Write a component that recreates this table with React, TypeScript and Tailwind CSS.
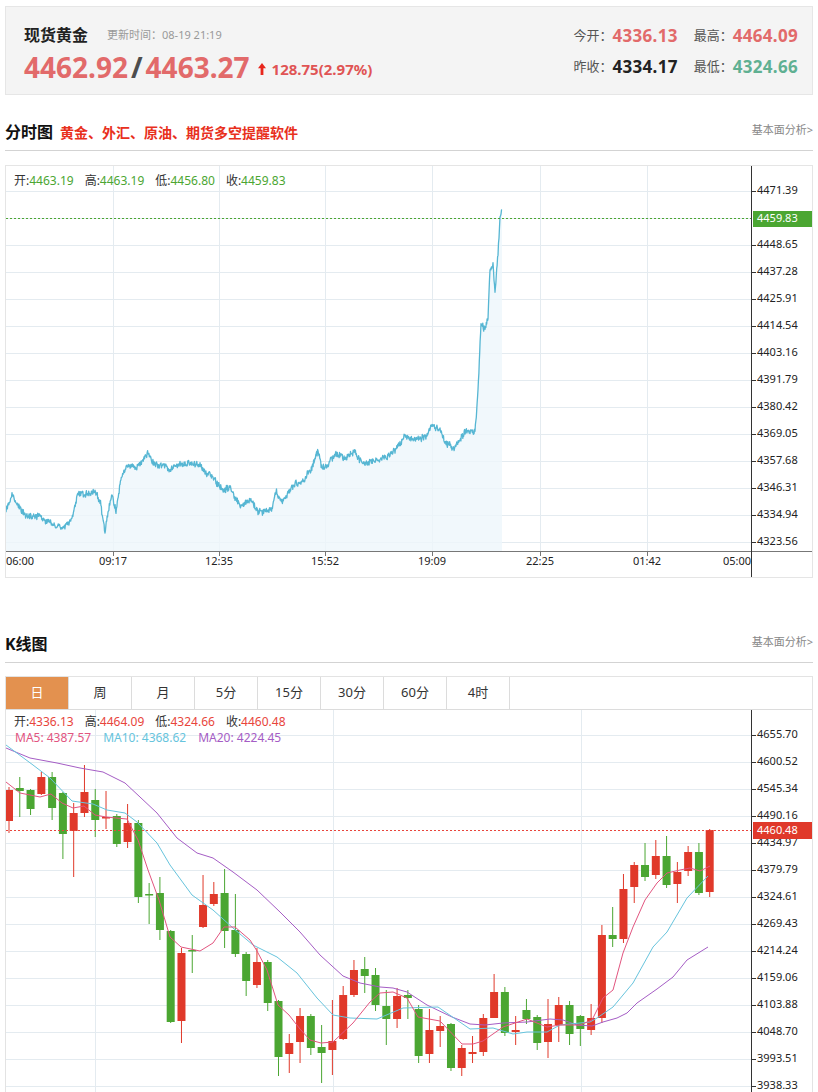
import React from "react";

const RED = "#e0392a";
const GREEN = "#4ba632";

// keypoints of the intraday line, page coordinates
const lineKeys: [number, number][] = [
  [6, 510], [12, 495], [18, 505], [22, 513], [30, 517], [40, 518], [50, 523], [60, 530], [68, 525],
  [72, 515], [78, 492], [90, 492], [95, 490], [100, 500], [105, 533], [108, 510], [112, 495],
  [116, 512], [120, 485], [127, 465], [135, 468], [145, 460], [148, 452], [152, 462], [165, 468],
  [170, 470], [180, 462], [195, 465], [205, 470], [215, 478], [222, 490], [230, 488], [240, 506],
  [250, 500], [258, 513], [265, 510], [272, 508], [276, 490], [282, 500], [290, 493], [296, 483],
  [305, 478], [310, 470], [318, 452], [322, 468], [328, 465], [335, 452], [345, 458], [355, 452],
  [362, 462], [370, 465], [380, 460], [390, 455], [400, 445], [405, 437], [415, 440], [425, 438],
  [432, 425], [440, 430], [447, 443], [455, 447], [460, 440], [466, 430], [475, 433], [478, 390],
  [481, 325], [485, 330], [488, 315], [490, 270], [493, 265], [495, 295], [498, 255], [500, 220],
  [502, 210],
];

const rand = (i: number) => {
  const v = Math.sin(i * 12.9898 + 4.1) * 43758.5453;
  return v - Math.floor(v);
};

function buildLine() {
  const pts: [number, number][] = [];
  let c = 0;
  let walk = 0;
  for (let k = 0; k < lineKeys.length - 1; k++) {
    const [x0, y0] = lineKeys[k];
    const [x1, y1] = lineKeys[k + 1];
    const n = Math.max(1, Math.round((x1 - x0) / 0.45));
    for (let j = 0; j < n; j++) {
      const t = j / n;
      walk = walk * 0.85 + (rand(c++) - 0.5) * 2.2;
      const jitter = (rand(c++ + 9000) - 0.5) * 5.5;
      pts.push([x0 + (x1 - x0) * t, y0 + (y1 - y0) * t + walk + jitter]);
    }
  }
  pts.push(lineKeys[lineKeys.length - 1]);
  return pts;
}

const linePts = buildLine();
const lineD = linePts.map(([x, y], i) => `${i ? "L" : "M"}${x.toFixed(1)} ${y.toFixed(1)}`).join(" ");
const areaD = `${lineD} L502 551 L6 551 Z`;

const minuteLabels = [
  "4471.39", "", "4448.65", "4437.28", "4425.91", "4414.54", "4403.16", "4391.79", "4380.42",
  "4369.05", "4357.68", "4346.31", "4334.94", "4323.56",
];
const minuteTimes = [
  { x: 6, t: "06:00", a: "start" },
  { x: 113, t: "09:17", a: "middle" },
  { x: 219, t: "12:35", a: "middle" },
  { x: 325, t: "15:52", a: "middle" },
  { x: 432, t: "19:09", a: "middle" },
  { x: 540, t: "22:25", a: "middle" },
  { x: 647, t: "01:42", a: "middle" },
  { x: 751, t: "05:00", a: "end" },
];

const kLabels = [
  "4655.70", "4600.52", "4545.34", "4490.16", "4434.97", "4379.79", "4324.61", "4269.43",
  "4214.24", "4159.06", "4103.88", "4048.70", "3993.51", "3938.33", "3883.15",
];

// [bodyTop, bodyBottom, high, low, up]
const candles: number[][] = [
  [790, 821, 787, 833, 1], [788, 791, 777, 817, 0], [790, 809, 789, 815, 0], [777, 794, 772, 795, 1],
  [777, 808, 772, 820, 0], [793, 834, 792, 859, 0], [813, 831, 803, 877, 1], [792, 813, 765, 817, 1],
  [800, 820, 789, 837, 0], [817, 818, 791, 829, 1], [816, 844, 814, 847, 0], [823, 842, 804, 848, 1],
  [823, 897, 820, 903, 0], [894, 895, 883, 924, 0], [893, 930, 877, 940, 0], [931, 1022, 930, 1023, 0],
  [953, 1021, 948, 1043, 1], [950, 951, 935, 973, 0], [905, 927, 875, 928, 1], [894, 904, 882, 906, 1],
  [893, 931, 869, 948, 0], [930, 954, 894, 957, 0], [954, 981, 952, 996, 0], [962, 985, 948, 988, 1],
  [962, 1003, 960, 1011, 0], [1001, 1057, 1000, 1076, 0], [1043, 1054, 1034, 1073, 1], [1016, 1042, 1008, 1063, 1],
  [1016, 1048, 1014, 1055, 0], [1047, 1053, 1025, 1083, 0], [1041, 1050, 1000, 1075, 1], [995, 1039, 986, 1040, 1],
  [970, 995, 960, 997, 1], [969, 976, 957, 993, 0], [975, 1005, 968, 1011, 0], [1006, 1019, 990, 1045, 0],
  [996, 1019, 988, 1028, 1], [995, 998, 990, 1019, 0], [1009, 1056, 1005, 1063, 0], [1030, 1054, 1009, 1063, 1],
  [1026, 1031, 1016, 1047, 1], [1024, 1068, 1023, 1071, 0], [1048, 1068, 1045, 1076, 1], [1052, 1054, 1036, 1063, 1],
  [1018, 1052, 1014, 1056, 1], [992, 1018, 974, 1018, 1], [992, 1033, 987, 1036, 0], [1030, 1032, 1016, 1045, 1],
  [1010, 1019, 999, 1024, 0], [1017, 1043, 1015, 1050, 0], [1024, 1042, 999, 1058, 1], [1005, 1025, 997, 1042, 1],
  [1005, 1034, 1001, 1045, 0], [1016, 1029, 1015, 1046, 0], [1018, 1030, 1004, 1035, 1], [935, 1018, 925, 1023, 1],
  [935, 939, 907, 947, 0], [889, 939, 874, 943, 1], [865, 887, 862, 903, 1], [865, 877, 843, 881, 0],
  [856, 875, 840, 879, 1], [856, 885, 836, 888, 0], [872, 884, 862, 903, 1], [852, 871, 846, 876, 1],
  [852, 893, 843, 895, 0], [830, 892, 829, 897, 1],
];

const ma5 = "6,782 20,793 40,797 51,794 62,803 73,808 84,806 95,815 106,817 116,818 127,819 138,840 148,870 159,900 170,937 181,947 200,951 213,943 224,927 235,927 250,940 257,951 267,970 278,1005 289,1015 300,1029 310,1040 321,1043 333,1042 353,1023 370,1002 380,993 393,992 407,998 418,1017 440,1021 462,1044 473,1044 483,1041 503,1027 527,1019 547,1027 560,1025 580,1025 592,1020 603,998 613,990 623,953 633,927 645,900 657,883 667,873 680,870 690,868 700,871 710,866";
const ma10 = "6,745 33,765 50,778 72,801 93,804 107,810 125,813 137,822 157,843 170,865 192,895 213,910 233,928 253,945 277,957 297,973 317,998 333,1015 350,1018 377,1019 403,1008 438,1007 470,1029 493,1028 513,1034 527,1032 547,1032 560,1025 590,1022 597,1018 613,1007 633,983 653,947 667,932 687,898 708,876";
const ma20 = "6,748 30,758 57,763 80,768 103,772 125,783 140,797 157,813 177,838 197,853 213,858 233,872 257,890 280,912 300,932 320,955 343,976 360,983 380,987 393,988 407,992 427,1005 452,1017 470,1024 485,1025 503,1023 527,1022 550,1019 563,1020 577,1025 592,1026 603,1022 617,1018 627,1013 637,1003 657,989 673,977 687,960 708,947";

function UpArrow() {
  return (
    <svg width="8" height="12" viewBox="0 0 8 12" className="mr-[6px]">
      <path d="M4 0 L8 5.2 H5.4 V12 H2.6 V5.2 H0 Z" fill="#e8261c" />
    </svg>
  );
}

function Header() {
  return (
    <div className="h-[89px] bg-[#f4f4f4] border border-[#e6e6e6] flex justify-between">
      <div className="pl-[18px] pt-[17px]">
        <div className="flex items-center h-[22px]">
          <span className="text-[16px] font-bold text-[#222]">现货黄金</span>
          <span className="ml-[19px] text-[11px] text-[#999]">更新时间：08-19 21:19</span>
        </div>
        <div className="flex items-center h-[32px] mt-[5px]">
          <span className="text-[28px] font-bold text-[#e26a6a] leading-none">4462.92</span>
          <span className="text-[28px] font-bold text-[#4d4d4d] leading-none mx-[3px]">/</span>
          <span className="text-[28px] font-bold text-[#e26a6a] leading-none">4463.27</span>
          <span className="ml-[8px] flex items-center mt-[4px]">
            <UpArrow />
            <span className="text-[15px] font-bold text-[#e05454]">128.75(2.97%)</span>
          </span>
        </div>
      </div>
      <div className="pr-[14px] pt-[17px] grid grid-cols-[auto_auto] gap-x-[16px] gap-y-[7px] h-fit">
        <div className="flex items-center h-[24px]">
          <span className="text-[13px] text-[#555]">今开：</span>
          <span className="text-[17px] font-bold text-[#e26a6a] tracking-[0.3px]">4336.13</span>
        </div>
        <div className="flex items-center h-[24px]">
          <span className="text-[13px] text-[#555]">最高：</span>
          <span className="text-[17px] font-bold text-[#e26a6a] tracking-[0.3px]">4464.09</span>
        </div>
        <div className="flex items-center h-[24px]">
          <span className="text-[13px] text-[#555]">昨收：</span>
          <span className="text-[17px] font-bold text-[#222] tracking-[0.3px]">4334.17</span>
        </div>
        <div className="flex items-center h-[24px]">
          <span className="text-[13px] text-[#555]">最低：</span>
          <span className="text-[17px] font-bold text-[#5fb092] tracking-[0.3px]">4324.66</span>
        </div>
      </div>
    </div>
  );
}

function SectionTitle({ title, promo, className }: { title: string; promo?: string; className?: string }) {
  return (
    <div className={`h-[37px] border-b border-[#d3d3d3] flex items-center justify-between ${className ?? ""}`}>
      <div className="flex items-center">
        <span className="text-[16px] font-bold text-[#111]">{title}</span>
        {promo && <span className="ml-[7px] text-[14px] font-bold text-[#e8301c]">{promo}</span>}
      </div>
      <span className="text-[11px] text-[#888] mt-[-4px]">基本面分析&gt;</span>
    </div>
  );
}

function LegendItem({ label, value, color }: { label: string; value: string; color: string }) {
  return (
    <span className="whitespace-nowrap">
      <span className="text-[#333]">{label}</span>
      <span style={{ color }}>{value}</span>
    </span>
  );
}

function MinuteChart() {
  return (
    <div className="mt-[14px] h-[413px] border border-[#e5e5e5] relative overflow-hidden">
      <svg width="806" height="411" className="block">
        <g transform="translate(-6,-166)" fontFamily="'Noto Sans', sans-serif" fontSize="11">
          {minuteLabels.map((_, k) => (
            <line key={k} x1={6} x2={751} y1={191.5 + 27 * k} y2={191.5 + 27 * k} stroke="#e4ebf0" />
          ))}
          {[113, 219, 325, 432, 540, 647].map((x) => (
            <line key={x} x1={x + 0.5} x2={x + 0.5} y1={166} y2={551} stroke="#e4ebf0" />
          ))}
          <path d={areaD} fill="#eef6fb" opacity="0.8" />
          <path d={lineD} fill="none" stroke="#56b6d3" strokeWidth="1.3" strokeLinejoin="round" />
          <line x1={6} x2={751} y1={218.5} y2={218.5} stroke={GREEN} strokeDasharray="2 2" />
          <line x1={6} x2={818} y1={551.5} y2={551.5} stroke="#777" />
          <line x1={751.5} x2={751.5} y1={166} y2={580} stroke="#333" />
          {minuteLabels.map((l, k) =>
            l ? (
              <g key={k}>
                <line x1={751} x2={756} y1={191.5 + 27 * k} y2={191.5 + 27 * k} stroke="#333" />
                <text x={757} y={191.5 + 27 * k} dominantBaseline="middle" fill="#222">
                  {l}
                </text>
              </g>
            ) : null
          )}
          <rect x={753} y={211} width={60} height={16} fill={GREEN} />
          <text x={757} y={219.5} dominantBaseline="middle" fill="#fff">
            4459.83
          </text>
          {minuteTimes.map((m) => (
            <g key={m.t}>
              {m.a === "middle" && <line x1={m.x + 0.5} x2={m.x + 0.5} y1={551} y2={556} stroke="#777" />}
              <text x={m.x} y={562} dominantBaseline="middle" textAnchor={m.a as "start"} fill="#222">
                {m.t}
              </text>
            </g>
          ))}
        </g>
      </svg>
      <div className="absolute left-[8px] top-[6px] flex gap-[11px] text-[12px]">
        <LegendItem label="开:" value="4463.19" color={GREEN} />
        <LegendItem label="高:" value="4463.19" color={GREEN} />
        <LegendItem label="低:" value="4456.80" color={GREEN} />
        <LegendItem label="收:" value="4459.83" color={GREEN} />
      </div>
    </div>
  );
}

const tabs = ["日", "周", "月", "5分", "15分", "30分", "60分", "4时"];

function KChart() {
  return (
    <div className="mt-[13px] border border-[#e3e3e3]">
      <div className="flex h-[33px] border-b border-[#dcdcdc]">
        {tabs.map((t, i) => (
          <div
            key={t}
            className={`w-[63px] flex items-center justify-center text-[13px] border-r border-[#dcdcdc] ${
              i === 0 ? "bg-[#e3914f] text-white" : "text-[#333]"
            }`}
          >
            {t}
          </div>
        ))}
      </div>
      <div className="relative h-[420px] overflow-hidden">
        <svg width="806" height="420" className="block">
          <g transform="translate(-6,-710)" fontFamily="'Noto Sans', sans-serif" fontSize="11">
            {kLabels.map((_, k) => (
              <line key={k} x1={6} x2={751} y1={735.5 + 27 * k} y2={735.5 + 27 * k} stroke="#e4ebf0" />
            ))}
            {[95, 333, 581].map((x) => (
              <line key={x} x1={x + 0.5} x2={x + 0.5} y1={710} y2={1130} stroke="#e4ebf0" />
            ))}
            {candles.map(([top, bot, hi, lo, up], i) => {
              const cx = 9 + i * 10.78;
              const c = up ? RED : GREEN;
              return (
                <g key={i}>
                  <line x1={cx} x2={cx} y1={hi} y2={lo} stroke={c} strokeWidth="1" />
                  <rect x={cx - 4} y={top} width={8} height={Math.max(1.5, bot - top)} fill={c} />
                </g>
              );
            })}
            <polyline points={ma20} fill="none" stroke="#a55dc5" strokeWidth="1" />
            <polyline points={ma10} fill="none" stroke="#67c4dd" strokeWidth="1" />
            <polyline points={ma5} fill="none" stroke="#e2557f" strokeWidth="1" />
            <line x1={6} x2={751} y1={830.5} y2={830.5} stroke="#e8453c" strokeDasharray="2 2" />
            <line x1={751.5} x2={751.5} y1={710} y2={1130} stroke="#333" />
            {kLabels.map((l, k) => (
              <g key={l}>
                <line x1={751} x2={756} y1={735.5 + 27 * k} y2={735.5 + 27 * k} stroke="#333" />
                <text x={757} y={735.5 + 27 * k} dominantBaseline="middle" fill="#222">
                  {l}
                </text>
              </g>
            ))}
            <rect x={753} y={822} width={60} height={17} fill={RED} />
            <text x={757} y={831} dominantBaseline="middle" fill="#fff">
              4460.48
            </text>
          </g>
        </svg>
        <div className="absolute left-[8px] top-[4px] text-[12px] leading-[16px]">
          <div className="flex gap-[11px]">
            <LegendItem label="开:" value="4336.13" color="#e8453c" />
            <LegendItem label="高:" value="4464.09" color="#e8453c" />
            <LegendItem label="低:" value="4324.66" color="#e8453c" />
            <LegendItem label="收:" value="4460.48" color="#e8453c" />
          </div>
          <div className="flex gap-[12px] ml-[1px]">
            <span className="text-[#e2557f]">MA5: 4387.57</span>
            <span className="text-[#67c4dd]">MA10: 4368.62</span>
            <span className="text-[#a55dc5]">MA20: 4224.45</span>
          </div>
        </div>
      </div>
    </div>
  );
}

export default function App() {
  return (
    <div className="w-[818px] bg-white px-[5px] pt-[6px] font-['Noto_Sans','Noto_Sans_CJK_SC',sans-serif] text-[#333]">
      <Header />
      <SectionTitle title="分时图" promo="黄金、外汇、原油、期货多空提醒软件" className="mt-[19px]" />
      <MinuteChart />
      <SectionTitle title="K线图" className="mt-[48px]" />
      <KChart />
    </div>
  );
}
